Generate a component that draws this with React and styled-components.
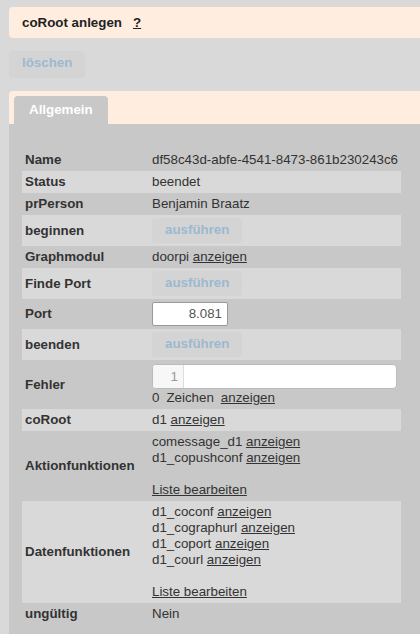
import React from 'react';
import styled, { createGlobalStyle } from 'styled-components';

const GlobalStyle = createGlobalStyle`
  html, body {
    margin: 0;
    padding: 0;
    background: #d9d9d9;
  }
  body {
    font-family: "Liberation Sans", Arial, sans-serif;
    font-size: 13.33px;
    line-height: 16px;
    color: #333;
  }
`;

const Page = styled.div`
  padding: 7px 0 0 9px;
  width: 430px;
`;

const Header = styled.div`
  display: flex;
  align-items: center;
  gap: 11px;
  height: 31px;
  padding: 0 13px;
  background: #ffeedf;
  border-radius: 4px 0 0 4px;
  font-weight: bold;
  color: #222;
`;

const Help = styled.a`
  color: #222;
  text-decoration: underline;
`;

const Toolbar = styled.div`
  padding: 13px 0;
`;

const Button = styled.button`
  font-family: inherit;
  font-size: 13.33px;
  font-weight: bold;
  line-height: 16px;
  color: #9cb9cf;
  background: #d4d4d4;
  border: none;
  border-radius: 4px;
  height: ${p => (p.$small ? '25px' : '27px')};
  padding: ${p => (p.$small ? '0 13px 1px' : '0 13px 3px')};
  cursor: default;
  display: block;
`;

const TabStrip = styled.div`
  display: flex;
  align-items: flex-end;
  height: 33px;
  padding-left: 5px;
  background: #ffeedf;
  border-radius: 4px 0 0 0;
`;

const Tab = styled.div`
  height: 28px;
  display: flex;
  align-items: center;
  padding: 0 15px;
  background: #c8c8c8;
  color: #fff;
  font-weight: bold;
  border-radius: 4px 4px 0 0;
`;

const Panel = styled.div`
  background: #c8c8c8;
  padding: 25px 13px 20px;
  min-height: 470px;
`;

const Table = styled.table`
  width: 379px;
  border-collapse: collapse;
`;

const Row = styled.tr`
  background: ${p => (p.$light ? '#d9d9d9' : 'transparent')};
`;

const Label = styled.th`
  width: 124px;
  padding: 3px 0 3px 3px;
  text-align: left;
  vertical-align: middle;
  font-weight: bold;
  color: #333;
  white-space: nowrap;
`;

const Value = styled.td`
  padding: 3px 0 3px 3px;
  vertical-align: middle;
  white-space: nowrap;
`;

const Link = styled.a`
  color: #333;
  text-decoration: underline;
`;

const Blank = styled.div`
  height: 16px;
`;

const NumberInput = styled.div`
  width: 64px;
  height: 22px;
  padding: 0 5px;
  background: #fff;
  border: 1px solid #999;
  border-radius: 2px;
  display: flex;
  align-items: center;
  justify-content: flex-end;
  color: #555;
`;

const Editor = styled.div`
  display: flex;
  height: 23px;
  width: 243px;
  margin-top: 1px;
  background: #fff;
  border: 1px solid #bbb;
  border-radius: 4px;
  overflow: hidden;
`;

const Gutter = styled.div`
  width: 25px;
  padding-right: 5px;
  background: #f7f7f7;
  border-right: 1px solid #ddd;
  color: #999;
  text-align: right;
  line-height: 23px;
`;

const Counter = styled.div`
  display: flex;
  gap: 7px;
  margin-top: 1px;
`;

const Item = ({ name }) => (
  <div>
    {name} <Link>anzeigen</Link>
  </div>
);

export default function App() {
  return (
    <>
      <GlobalStyle />
      <Page>
        <Header>
          <span>coRoot anlegen</span>
          <Help>?</Help>
        </Header>
        <Toolbar>
          <Button>löschen</Button>
        </Toolbar>
        <TabStrip>
          <Tab>Allgemein</Tab>
        </TabStrip>
        <Panel>
          <Table>
            <tbody>
              <Row>
                <Label>Name</Label>
                <Value>df58c43d-abfe-4541-8473-861b230243c6</Value>
              </Row>
              <Row $light>
                <Label>Status</Label>
                <Value>beendet</Value>
              </Row>
              <Row>
                <Label>prPerson</Label>
                <Value>Benjamin Braatz</Value>
              </Row>
              <Row $light>
                <Label>beginnen</Label>
                <Value>
                  <Button $small>ausführen</Button>
                </Value>
              </Row>
              <Row>
                <Label>Graphmodul</Label>
                <Value>
                  <Item name="doorpi" />
                </Value>
              </Row>
              <Row $light>
                <Label>Finde Port</Label>
                <Value>
                  <Button $small>ausführen</Button>
                </Value>
              </Row>
              <Row>
                <Label>Port</Label>
                <Value>
                  <NumberInput>8.081</NumberInput>
                </Value>
              </Row>
              <Row $light>
                <Label>beenden</Label>
                <Value>
                  <Button $small>ausführen</Button>
                </Value>
              </Row>
              <Row>
                <Label>Fehler</Label>
                <Value>
                  <Editor>
                    <Gutter>1</Gutter>
                  </Editor>
                  <Counter>
                    <span>0</span>
                    <span>Zeichen</span>
                    <Link>anzeigen</Link>
                  </Counter>
                </Value>
              </Row>
              <Row $light>
                <Label>coRoot</Label>
                <Value>
                  <Item name="d1" />
                </Value>
              </Row>
              <Row>
                <Label>Aktionfunktionen</Label>
                <Value>
                  <Item name="comessage_d1" />
                  <Item name="d1_copushconf" />
                  <Blank />
                  <Link>Liste bearbeiten</Link>
                </Value>
              </Row>
              <Row $light>
                <Label>Datenfunktionen</Label>
                <Value>
                  <Item name="d1_coconf" />
                  <Item name="d1_cographurl" />
                  <Item name="d1_coport" />
                  <Item name="d1_courl" />
                  <Blank />
                  <Link>Liste bearbeiten</Link>
                </Value>
              </Row>
              <Row>
                <Label>ungültig</Label>
                <Value>Nein</Value>
              </Row>
            </tbody>
          </Table>
        </Panel>
      </Page>
    </>
  );
}
